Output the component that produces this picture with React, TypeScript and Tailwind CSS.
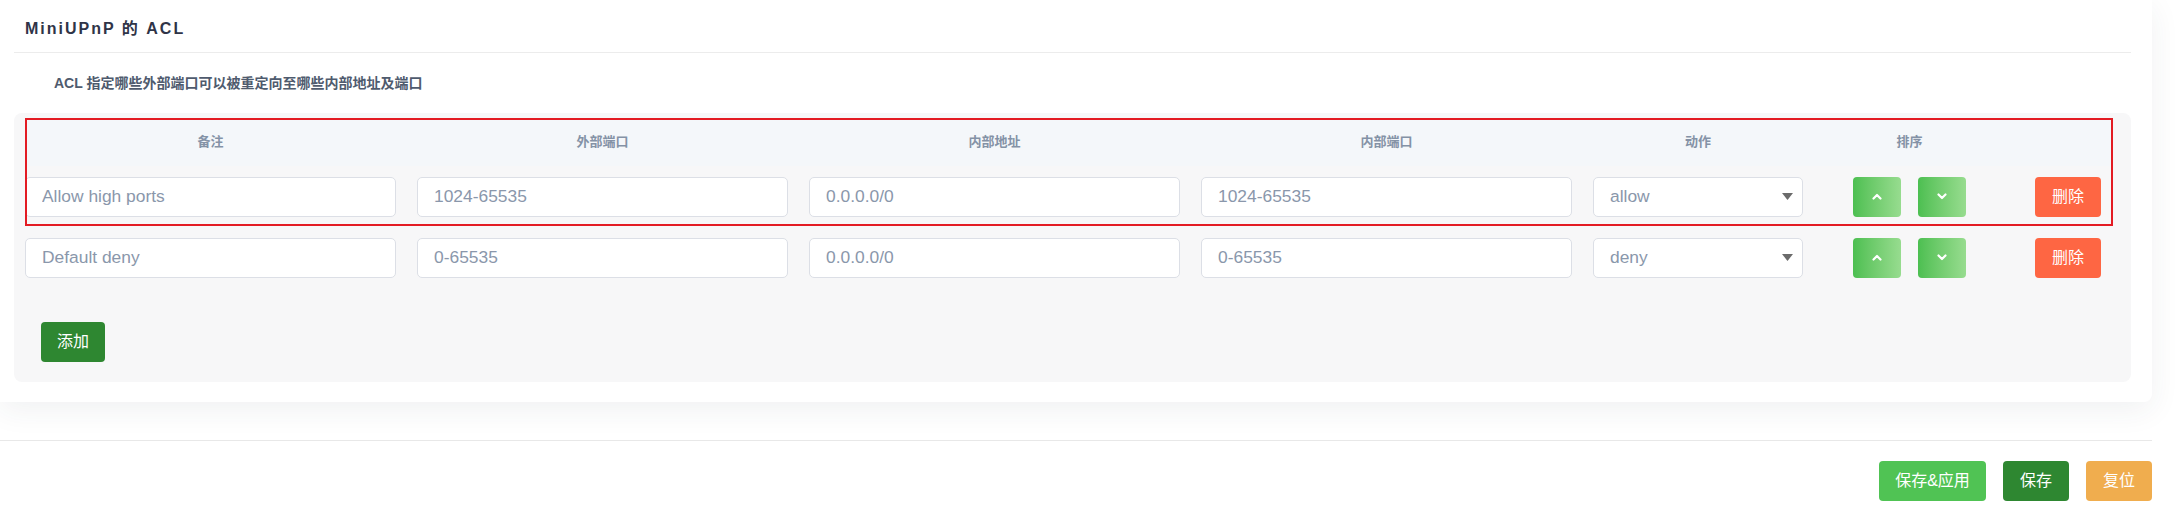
const rows = [
  { note: "Allow high ports", ext: "1024-65535", addr: "0.0.0.0/0", port: "1024-65535", action: "allow" },
  { note: "Default deny", ext: "0-65535", addr: "0.0.0.0/0", port: "0-65535", action: "deny" },
];

const headers = ["备注", "外部端口", "内部地址", "内部端口", "动作", "排序", ""];

const cols = "grid grid-cols-[371px_371px_371px_371px_210px_171px_97px] gap-x-[21px]";
const font = "font-['Liberation_Sans','Noto_Sans_CJK_SC',sans-serif]";

function Field({ value }: { value: string }) {
  return (
    <input
      readOnly
      value={value}
      className="h-10 w-full rounded-[5px] border border-[#dcdfe6] bg-white px-4 text-[17.4px] text-[#8a97ab] outline-none"
    />
  );
}

function Chevron({ up }: { up?: boolean }) {
  return (
    <svg width="10" height="7" viewBox="0 0 10 7" fill="none">
      <polyline
        points={up ? "1.5,5.5 5,2 8.5,5.5" : "1.5,1.5 5,5 8.5,1.5"}
        stroke="white"
        strokeWidth="2.2"
        strokeLinecap="round"
        strokeLinejoin="round"
      />
    </svg>
  );
}

function Row({ row }: { row: (typeof rows)[number] }) {
  return (
    <div className={`${cols} h-[61px] items-center`}>
      <Field value={row.note} />
      <Field value={row.ext} />
      <Field value={row.addr} />
      <Field value={row.port} />
      <div className="flex h-10 items-center justify-between rounded-[5px] border border-[#dcdfe6] bg-white pl-4 pr-[9px] text-[17.4px] text-[#8a97ab]">
        <span>{row.action}</span>
        <svg width="11" height="7" viewBox="0 0 11 7">
          <path d="M0 0h11L5.5 7z" fill="#6b6b6b" />
        </svg>
      </div>
      <div className="flex justify-center gap-[17px]">
        <button className="grid h-10 w-12 place-items-center rounded-[4px] bg-gradient-to-r from-[#4cbf51] to-[#97dc8f]">
          <Chevron up />
        </button>
        <button className="grid h-10 w-12 place-items-center rounded-[4px] bg-gradient-to-r from-[#4cbf51] to-[#97dc8f]">
          <Chevron />
        </button>
      </div>
      <div className="flex justify-end pr-3">
        <button className="h-10 w-[66px] rounded-[4px] bg-[#fe6643] text-[16px] text-white">删除</button>
      </div>
    </div>
  );
}

export default function App() {
  return (
    <div className={`min-h-screen bg-white ${font}`}>
      <div className="w-[2152px]">
        <section className="rounded-br-lg bg-white pb-5 pl-[14px] pr-[21px] shadow-[0_8px_30px_rgba(40,50,70,0.07)]">
          <h2 className="border-b border-[#ececec] pb-[11px] pl-[11px] pt-[17px] text-[16px] font-bold leading-6 tracking-[2px] text-[#2f3447]">
            MiniUPnP 的 ACL
          </h2>
          <p className="mt-5 pl-10 text-[14px] font-bold leading-5 text-[#4f5b6e]">
            ACL 指定哪些外部端口可以被重定向至哪些内部地址及端口
          </p>

          <div className="mt-5 rounded-lg bg-[#f7f7f8] pb-5 pl-[11px] pr-[18px] pt-[5px]">
            <div className="relative">
              <div className={`${cols} h-12 items-center bg-[#f4f7fa] text-center text-[13px] font-bold text-[#8492a6]`}>
                {headers.map((h, i) => (
                  <span key={i}>{h}</span>
                ))}
              </div>
              <Row row={rows[0]} />
              <div className="pointer-events-none absolute inset-x-0 bottom-px top-0 border-2 border-[#e31b23]" />
            </div>
            <Row row={rows[1]} />
            <button className="ml-4 mt-[34px] h-10 w-16 rounded-[4px] bg-[#2e8731] text-[16px] text-white">添加</button>
          </div>
        </section>

        <div className="h-[38px]" />

        <footer className="flex justify-end gap-[17px] border-t border-[#e8e8e8] pt-5">
          <button className="h-10 w-[107px] rounded-[4px] bg-[#50c354] text-[16px] text-white">保存&应用</button>
          <button className="h-10 w-[66px] rounded-[4px] bg-[#2e8731] text-[16px] text-white">保存</button>
          <button className="h-10 w-[66px] rounded-[4px] bg-[#f0ad4e] text-[16px] text-white">复位</button>
        </footer>
      </div>
    </div>
  );
}
